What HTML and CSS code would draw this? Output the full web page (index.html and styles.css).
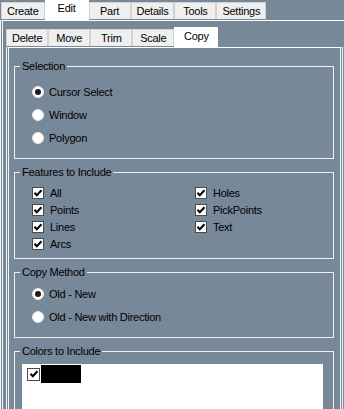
FILE: index.html
```html
<!DOCTYPE html>
<html lang="en">
<head>
<meta charset="utf-8">
<title>Copy</title>
<link rel="stylesheet" href="styles.css">
</head>
<body>
<div class="tabstrip outer-tabs">
  <div class="tab">Create</div>
  <div class="tab active">Edit</div>
  <div class="tab">Part</div>
  <div class="tab">Details</div>
  <div class="tab">Tools</div>
  <div class="tab">Settings</div>
</div>
<div class="outer-panel">
  <div class="tabstrip inner-tabs">
    <div class="tab">Delete</div>
    <div class="tab">Move</div>
    <div class="tab">Trim</div>
    <div class="tab">Scale</div>
    <div class="tab active">Copy</div>
  </div>
  <div class="inner-panel">
    <fieldset class="group group-selection">
      <legend>Selection</legend>
      <div class="radio-list">
        <div class="opt"><span class="radio checked"></span>Cursor Select</div>
        <div class="opt"><span class="radio"></span>Window</div>
        <div class="opt"><span class="radio"></span>Polygon</div>
      </div>
    </fieldset>
    <fieldset class="group group-features">
      <legend>Features to Include</legend>
      <div class="check-grid">
        <div class="chk"><span class="box"><svg viewBox="0 0 10 10" width="10" height="10"><path d="M1.5 4.8 L3.8 7.2 L8.5 2.3" /></svg></span>All</div>
        <div class="chk"><span class="box"><svg viewBox="0 0 10 10" width="10" height="10"><path d="M1.5 4.8 L3.8 7.2 L8.5 2.3" /></svg></span>Points</div>
        <div class="chk"><span class="box"><svg viewBox="0 0 10 10" width="10" height="10"><path d="M1.5 4.8 L3.8 7.2 L8.5 2.3" /></svg></span>Lines</div>
        <div class="chk"><span class="box"><svg viewBox="0 0 10 10" width="10" height="10"><path d="M1.5 4.8 L3.8 7.2 L8.5 2.3" /></svg></span>Arcs</div>
        <div class="chk"><span class="box"><svg viewBox="0 0 10 10" width="10" height="10"><path d="M1.5 4.8 L3.8 7.2 L8.5 2.3" /></svg></span>Holes</div>
        <div class="chk"><span class="box"><svg viewBox="0 0 10 10" width="10" height="10"><path d="M1.5 4.8 L3.8 7.2 L8.5 2.3" /></svg></span>PickPoints</div>
        <div class="chk"><span class="box"><svg viewBox="0 0 10 10" width="10" height="10"><path d="M1.5 4.8 L3.8 7.2 L8.5 2.3" /></svg></span>Text</div>
      </div>
    </fieldset>
    <fieldset class="group group-method">
      <legend>Copy Method</legend>
      <div class="radio-list">
        <div class="opt"><span class="radio checked"></span>Old - New</div>
        <div class="opt"><span class="radio"></span>Old - New with Direction</div>
      </div>
    </fieldset>
    <fieldset class="group group-colors">
      <legend>Colors to Include</legend>
      <div class="listbox">
        <div class="list-item"><span class="box"><svg viewBox="0 0 10 10" width="10" height="10"><path d="M1.5 4.8 L3.8 7.2 L8.5 2.3" /></svg></span><span class="swatch"></span></div>
      </div>
    </fieldset>
  </div>
</div>
</body>
</html>
```
FILE: styles.css
```css
html, body {
  margin: 0;
  padding: 0;
}
body {
  width: 344px;
  height: 409px;
  overflow: hidden;
  background: #778899;
  font-family: "Liberation Sans", Arial, sans-serif;
  font-size: 11px;
  letter-spacing: -0.25px;
  color: #000;
}

/* tab strips */
.tabstrip {
  display: flex;
  align-items: flex-start;
  height: 20px;
}
.outer-tabs {
  padding-left: 1px;
}
.tab {
  box-sizing: border-box;
  min-width: 42px;
  height: 17px;
  margin-top: 2px;
  padding: 2px 5px 0;
  line-height: 13px;
  text-align: center;
  background: #efefef;
  border: 1px solid #d2d2d2;
  border-bottom: none;
  white-space: nowrap;
}
.tab.active {
  min-width: 44px;
  height: 21px;
  margin-top: 0;
  padding-top: 1px;
  background: #fff;
  border-color: #fff;
  position: relative;
  z-index: 1;
}
.inner-tabs .tab.active {
  padding-top: 2px;
}

/* outer page */
.outer-panel {
  border-top: 1px solid #fff;
  border-left: 3px double #f4f4f4;
  padding: 6px 0 0 3px;
  height: 400px;
}

/* inner page */
.inner-panel {
  margin-right: 1px;
  border-top: 1px solid #fff;
  border-left: 3px double #f4f4f4;
  border-right: 3px double #f4f4f4;
  padding: 0 6px 0 5px;
  height: 380px;
}

/* group boxes */
.group {
  margin: 7px 0 0;
  min-width: 0;
  border: 1px solid #eef0f2;
  padding: 0 0 0 17px;
}
.group legend {
  margin-left: -12px;
  padding: 0 2px;
  line-height: 13px;
}
.group-selection {
  margin-top: 12px;
  padding-top: 7px;
  padding-bottom: 9px;
}
.group-features {
  padding-top: 5px;
  padding-bottom: 6px;
}
.group-method {
  padding-top: 3px;
  padding-bottom: 9px;
}
.group-colors {
  padding: 6px 10px 0 7px;
}
.group-colors legend {
  margin-left: -2px;
}

/* radio options */
.radio-list {
  display: flex;
  flex-direction: column;
}
.opt {
  display: flex;
  align-items: center;
  height: 23px;
  gap: 5px;
}
.radio {
  box-sizing: border-box;
  width: 12px;
  height: 12px;
  border-radius: 50%;
  background: #fff;
  border: 1px solid #e6e8ea;
  display: flex;
  align-items: center;
  justify-content: center;
}
.radio.checked::after {
  content: "";
  width: 6px;
  height: 6px;
  border-radius: 50%;
  background: #1c1c1c;
}

/* checkboxes */
.check-grid {
  display: grid;
  grid-template-columns: 163px auto;
  grid-template-rows: repeat(4, 17px);
  grid-auto-flow: column;
}
.chk {
  display: flex;
  align-items: center;
  gap: 6px;
}
.box {
  box-sizing: border-box;
  width: 12px;
  height: 12px;
  background: #fff;
  border: 1px solid #4a4a4a;
  display: flex;
  align-items: center;
  justify-content: center;
}
.box svg {
  display: block;
}
.box path {
  fill: none;
  stroke: #000;
  stroke-width: 2;
}

/* list box */
.listbox {
  background: #fff;
  height: 60px;
  padding: 1px 0 0 5px;
}
.list-item {
  display: flex;
  align-items: center;
  gap: 1px;
  height: 18px;
}
.list-item .box {
  width: 13px;
  height: 13px;
}
.swatch {
  display: block;
  width: 40px;
  height: 18px;
  background: #000;
}
```
